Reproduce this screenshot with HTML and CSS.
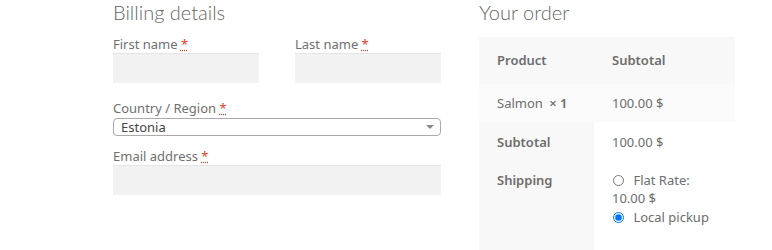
FILE: index.html
```html
<!DOCTYPE html>
<html lang="en">
<head>
    <meta charset="UTF-8">
    <meta name="viewport" content="width=device-width, initial-scale=1.0">
    <title>Checkout</title>
    <link rel="stylesheet" href="styles.css">
</head>
<body>
    <div class="checkout">
        <div class="billing">
            <h3>Billing details</h3>

            <div class="field-row two-col">
                <p class="field">
                    <label>First name <abbr class="required" title="required">*</abbr></label>
                    <input type="text" class="input-text">
                </p>
                <p class="field">
                    <label>Last name <abbr class="required" title="required">*</abbr></label>
                    <input type="text" class="input-text">
                </p>
            </div>

            <p class="field country">
                <label>Country / Region <abbr class="required" title="required">*</abbr></label>
                <span class="select-box">
                    <span class="select-value">Estonia</span>
                    <span class="select-arrow"></span>
                </span>
            </p>

            <p class="field">
                <label>Email address <abbr class="required" title="required">*</abbr></label>
                <input type="email" class="input-text">
            </p>
        </div>

        <div class="order">
            <h3>Your order</h3>
            <table class="order-table">
                <thead>
                    <tr>
                        <th class="col-name">Product</th>
                        <th>Subtotal</th>
                    </tr>
                </thead>
                <tbody>
                    <tr class="cart-item">
                        <td>Salmon <strong class="qty">&times;&nbsp;1</strong></td>
                        <td>100.00&nbsp;$</td>
                    </tr>
                </tbody>
                <tfoot>
                    <tr>
                        <th>Subtotal</th>
                        <td>100.00&nbsp;$</td>
                    </tr>
                    <tr class="shipping">
                        <th>Shipping</th>
                        <td>
                            <ul class="shipping-methods">
                                <li>
                                    <input type="radio" name="ship" id="flat">
                                    <label for="flat">Flat Rate: <span class="amount">10.00&nbsp;$</span></label>
                                </li>
                                <li>
                                    <input type="radio" name="ship" id="pickup" checked>
                                    <label for="pickup">Local pickup</label>
                                </li>
                            </ul>
                        </td>
                    </tr>
                </tfoot>
            </table>
        </div>
    </div>
</body>
</html>
```

FILE: styles.css
```css
* {
    margin: 0;
    padding: 0;
    box-sizing: border-box;
}

body {
    font-family: "Noto Sans", "Open Sans", sans-serif;
    font-size: 13px;
    color: #6d6d6d;
    background: #fff;
}

.checkout {
    display: flex;
    gap: 38px;
    padding-left: 113px;
}

h3 {
    font-family: Lato, "Open Sans", sans-serif;
    font-weight: 300;
    font-size: 20px;
    line-height: 24px;
    color: #666;
}

.billing {
    width: 328px;
}

.billing h3 {
    margin-bottom: 11px;
}

.field {
    display: flex;
    flex-direction: column;
    margin-bottom: 16px;
}

.field label {
    line-height: 18px;
    color: #707070;
}

.two-col {
    display: flex;
    justify-content: space-between;
}

.two-col .field {
    width: 146px;
}

.required {
    color: #e2401c;
    text-decoration: underline dotted;
    border: 0;
}

.input-text {
    height: 30px;
    background: #f2f2f2;
    border: 0;
    border-top: 1px solid #e4e4e4;
    outline: none;
}

.country {
    margin-bottom: 11px;
}

.country label {
    margin-bottom: 1px;
}

.select-box {
    display: flex;
    align-items: center;
    justify-content: space-between;
    height: 18px;
    border: 1px solid #aaa;
    border-radius: 4px;
    padding: 0 6px 0 7px;
    color: #444;
    line-height: 16px;
}

.select-arrow {
    width: 0;
    height: 0;
    border-left: 4px solid transparent;
    border-right: 4px solid transparent;
    border-top: 4px solid #888;
}

.order {
    width: 256px;
}

.order h3 {
    margin-bottom: 13px;
}

.order-table {
    width: 100%;
    border-collapse: collapse;
}

.order-table th,
.order-table td {
    text-align: left;
    padding: 10px 18px;
    line-height: 18px;
    vertical-align: top;
}

.order-table th {
    font-weight: 600;
}

.order-table thead th {
    background: #f8f8f8;
    padding-top: 14px;
    padding-bottom: 15px;
}

.col-name {
    width: 115px;
}

.cart-item td {
    background: #fbfbfb;
}

.qty {
    font-weight: 600;
    margin-left: 3px;
}

.order-table tfoot th {
    background: #f8f8f8;
}

.order-table tfoot tr:first-child th,
.order-table tfoot tr:first-child td {
    padding-top: 11px;
}

.shipping th,
.shipping td {
    height: 100px;
}

.shipping-methods {
    list-style: none;
}

.shipping-methods li {
    margin-bottom: 1px;
}

.shipping-methods input {
    width: 11px;
    height: 11px;
    margin: 0 6px 0 1px;
    vertical-align: -1px;
}
```
